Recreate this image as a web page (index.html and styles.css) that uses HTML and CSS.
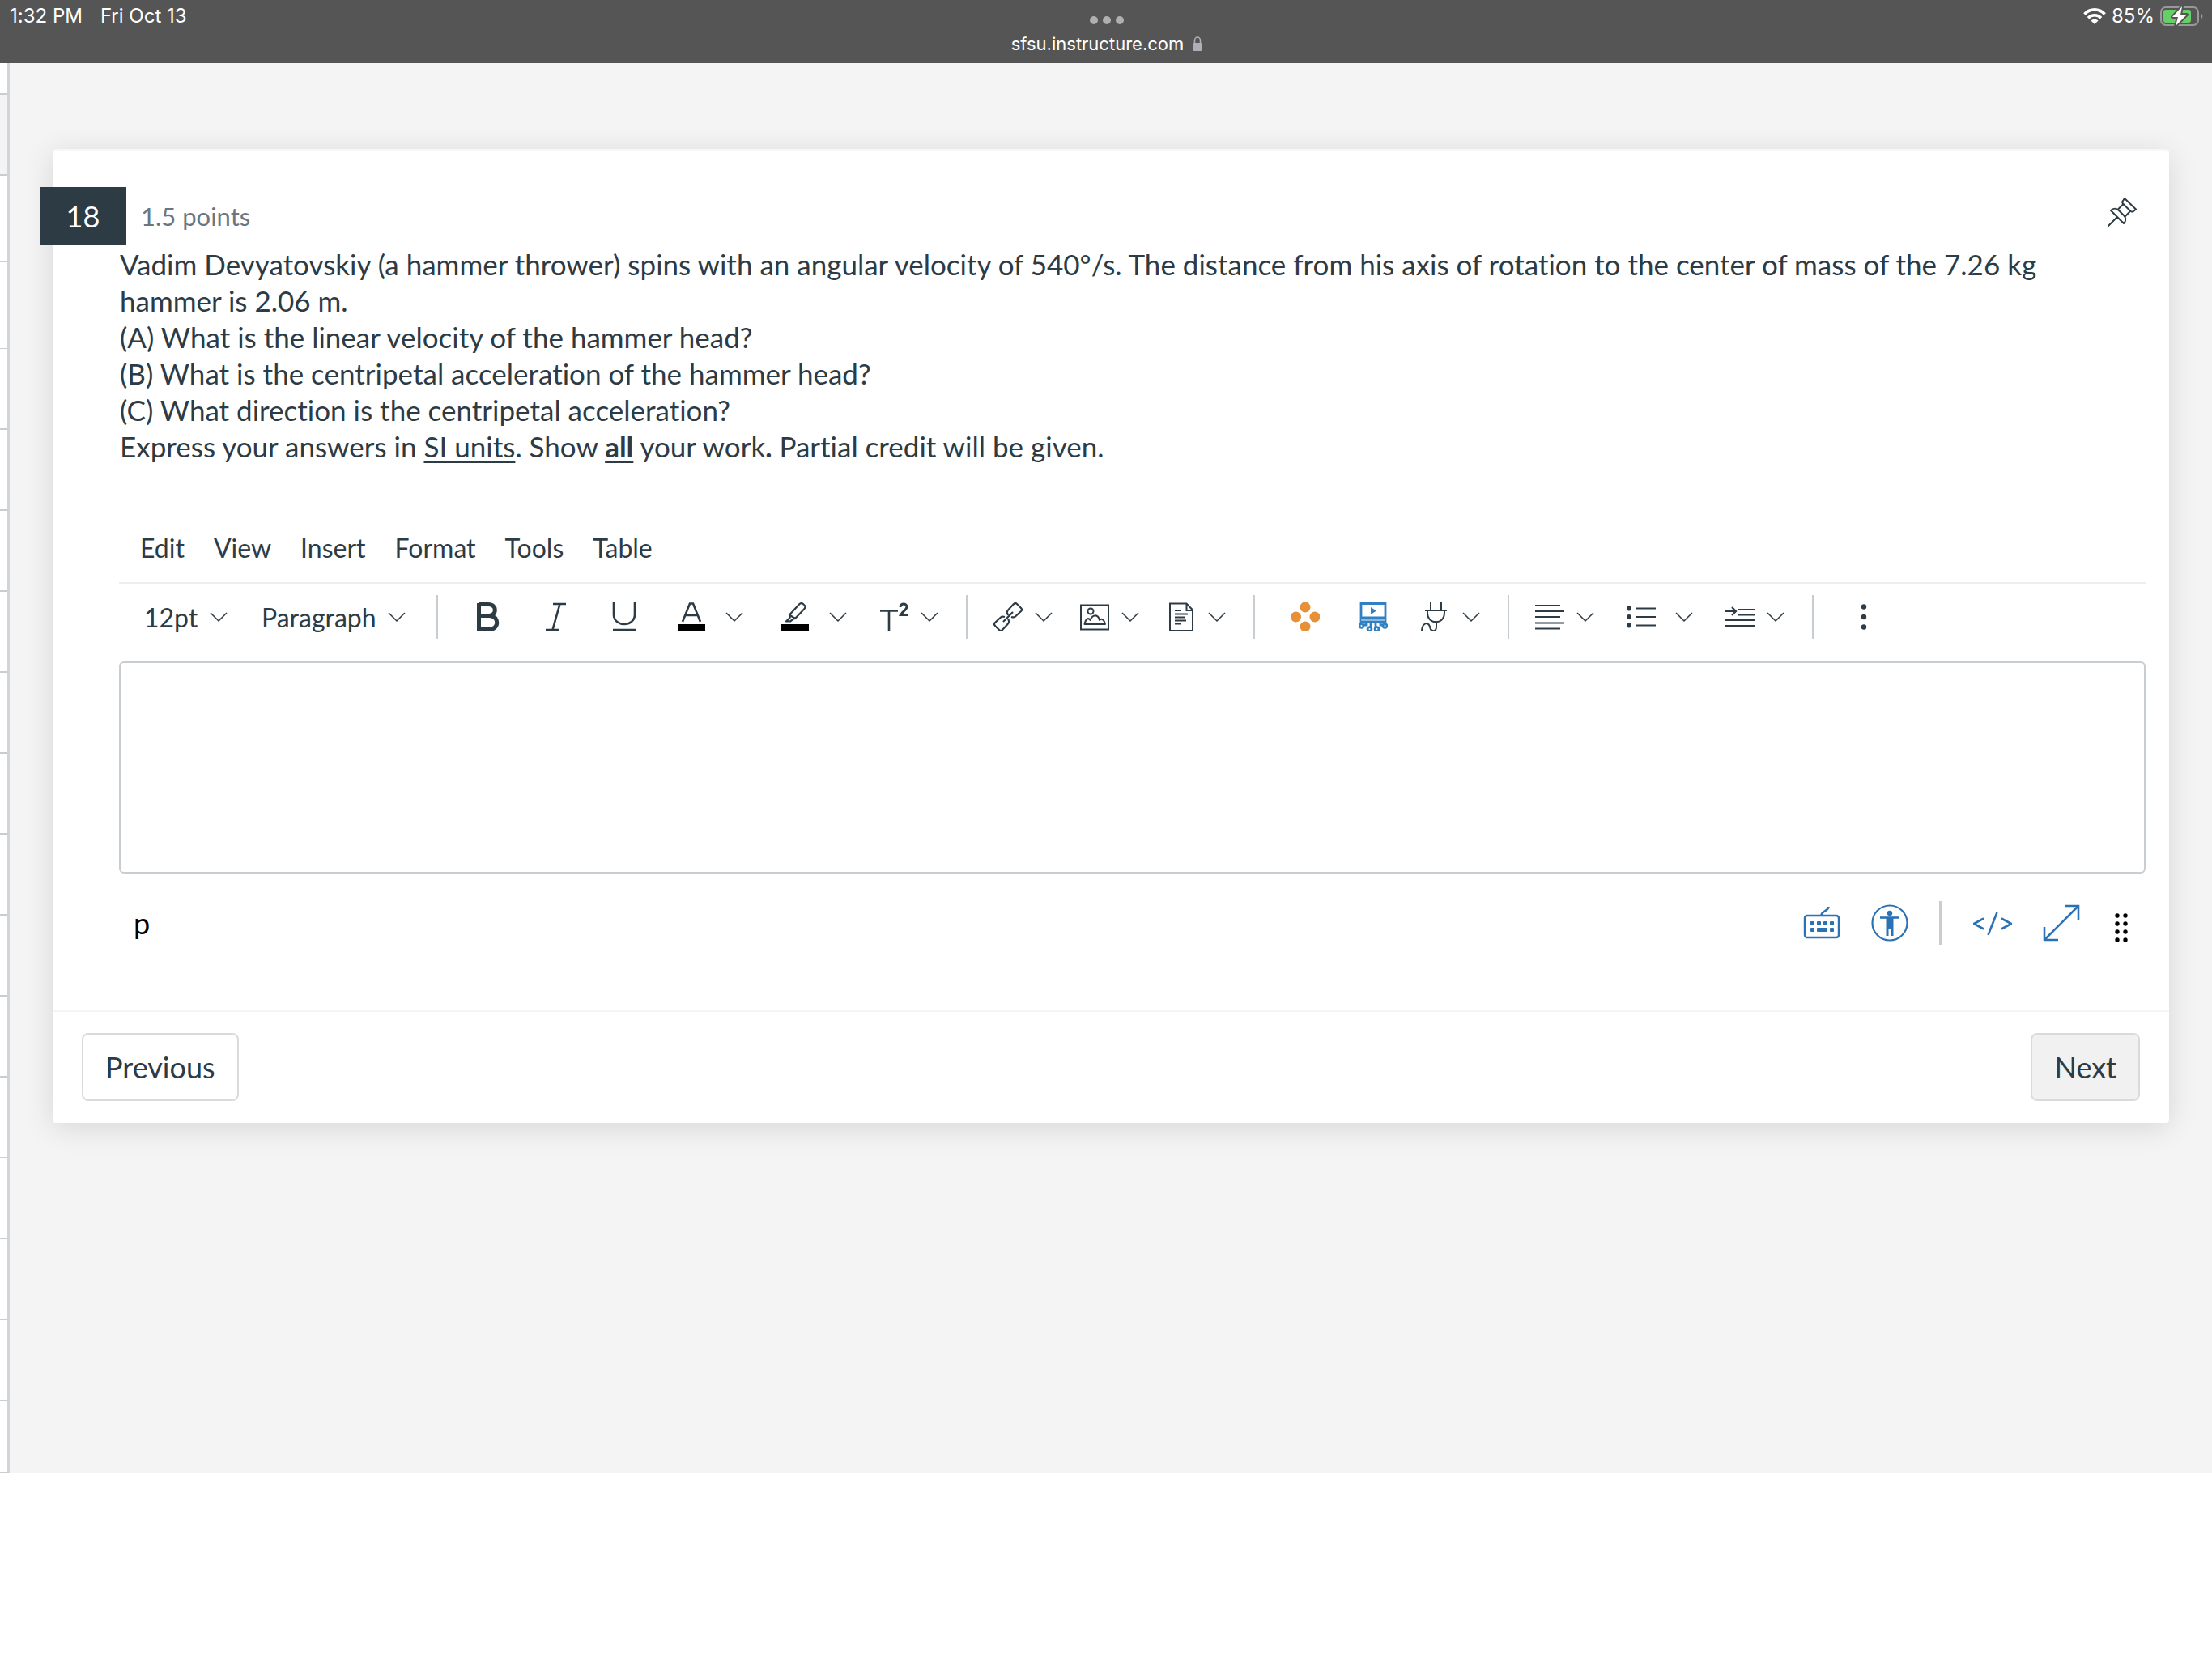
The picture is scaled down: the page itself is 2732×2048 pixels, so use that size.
FILE: index.html
```html
<!DOCTYPE html>
<html lang="en">
    <head>
        <meta charset="UTF-8">
        <meta name="viewport" content="width=device-width, initial-scale=1.0">
        <title>Quiz - Question 18</title>
        <link rel="stylesheet" href="styles.css">
    </head>

    <body>
        <svg class="defs" aria-hidden="true">
            <symbol id="chevron" viewBox="0 0 22 14"><path d="M1 2 L11 12 L21 2" fill="none" stroke="currentColor" stroke-width="1.500"/></symbol>
        </svg>

        <header class="statusbar">
            <div class="status-left">
                <span>1:32 PM</span>
                <span>Fri Oct 13</span>
            </div>
            <div class="status-center">
                <div class="dots"><i></i><i></i><i></i></div>
                <div class="address">
                    <span>sfsu.instructure.com</span>
                    <svg width="12" height="18" viewBox="0 0 12 18"><path d="M2.5 9 V5 a3.5 4 0 0 1 7 0 V9" fill="none" stroke="#b0aeb6" stroke-width="1.6"/><rect y="8" width="12" height="10" rx="2" fill="#b0aeb6"/></svg>
                </div>
            </div>
            <div class="status-right">
                <svg width="28" height="20" viewBox="0 0 28 20">
                    <g fill="none" stroke="#fff" stroke-width="3.6"><path d="M1.5 7.5 C8 0 20 0 26.5 7.5"/><path d="M6 12.2 C10.500 7.500 17.500 7.500 22 12.200"/></g>
                    <path d="M9.500 15.500 C12 13.200 16 13.200 18.500 15.500 L14 20 Z" fill="#fff"/>
                </svg>
                <span>85%</span>
                <svg width="54" height="26" viewBox="0 0 54 26">
                    <rect x="1" y="2" width="46" height="22" rx="6" fill="none" stroke="#999" stroke-width="2"/>
                    <path d="M50 9 a4.500 4.500 0 0 1 0 8 Z" fill="#999"/>
                    <rect x="4" y="5" width="34" height="16" rx="3" fill="#65d065"/>
                    <path d="M27 1 L15 14 H22 L19 25 L33 11 H25 Z" fill="#fff" stroke="#555" stroke-width="4" stroke-linejoin="round" paint-order="stroke"/>
                </svg>
            </div>
        </header>

        <div class="page">
            <aside class="rail">
                <div class="cell cell-top"></div>
                <div class="cell current"></div>
                <div class="cell tall"></div>
                <div class="cell tall"></div>
                <div class="cell"></div>
                <div class="cell"></div>
                <div class="cell"></div>
                <div class="cell"></div>
                <div class="cell"></div>
                <div class="cell"></div>
                <div class="cell"></div>
                <div class="cell"></div>
                <div class="cell"></div>
                <div class="cell"></div>
                <div class="cell"></div>
                <div class="cell"></div>
                <div class="cell"></div>
                <div class="cell cell-last"></div>
            </aside>

            <main class="content">
                <section class="card">
                    <div class="question-head">
                        <span class="number">18</span>
                        <span class="points">1.5 points</span>
                        <button class="pin" aria-label="Pin question">
                            <svg width="36" height="36" viewBox="0 0 36 36" fill="none" stroke="currentColor" stroke-width="2" stroke-linejoin="round" stroke-linecap="round"><path d="M1 35 L12 24 M21 1 L35 14.500 L32 17 C31 18 29 17.500 28 16.500 L19.500 8 C18 6.500 18 5 19 4 Z M18.500 9 L13 14.500 M27 18 L22 23 M4 16 C7 13 11 13 14 16 L20 22 C23 25 23 29 20 32 Z"/></svg>
                        </button>
                    </div>

                    <div class="question">
                        <p>Vadim Devyatovskiy (a hammer thrower) spins with an angular velocity of 540º/s. The distance from his axis of rotation to the center of mass of the 7.26 kg hammer is 2.06 m.</p>
                        <p>(A) What is the linear velocity of the hammer head?</p>
                        <p>(B) What is the centripetal acceleration of the hammer head?</p>
                        <p>(C) What direction is the centripetal acceleration?</p>
                        <p>Express your answers in <u>SI units</u>. Show <u><b>all</b></u> your work<b>.</b> Partial credit will be given.</p>
                    </div>

                    <div class="editor">
                        <div class="menubar">
                            <button>Edit</button>
                            <button>View</button>
                            <button>Insert</button>
                            <button>Format</button>
                            <button>Tools</button>
                            <button>Table</button>
                        </div>

                        <div class="toolbar">
                            <div class="picker">
                                <select aria-label="Font size"><option>12pt</option></select>
                                <svg class="chev"><use href="#chevron"/></svg>
                            </div>
                            <div class="picker">
                                <select aria-label="Block type"><option>Paragraph</option></select>
                                <svg class="chev"><use href="#chevron"/></svg>
                            </div>

                            <div class="group loose">
                                <button class="tool" aria-label="Bold">
                                    <svg viewBox="0 0 36 36"><path d="M6 2.500 H18 C29 2.500 29 16.500 19 16.500 H6 M19 16.500 C32 16.500 32 33.500 19 33.500 H6 M6.500 1 V35" fill="none" stroke="currentColor" stroke-width="5"/></svg>
                                </button>
                                <button class="tool" aria-label="Italic">
                                    <svg viewBox="0 0 36 36"><path d="M14 2 H30 M5 34 H22 M22.500 2 L13.500 34" fill="none" stroke="currentColor" stroke-width="2.600"/></svg>
                                </button>
                                <button class="tool" aria-label="Underline">
                                    <svg viewBox="0 0 36 36"><path d="M5 0 V15 C5 31 31 31 31 15 V0 M4 34 H32" fill="none" stroke="currentColor" stroke-width="2.600"/></svg>
                                </button>
                                <div class="split wide">
                                    <button aria-label="Text color"><svg viewBox="0 0 36 36"><path d="M7 24 L16 1.500 H20 L29 24 M10.500 16 H25.500" fill="none" stroke="currentColor" stroke-width="2.600"/><path d="M1 27 H35 V36 H1 Z" fill="#000"/></svg></button>
                                    <button aria-label="Text color options"><svg class="chev"><use href="#chevron"/></svg></button>
                                </div>
                                <div class="split wide">
                                    <button aria-label="Highlight"><svg viewBox="0 0 36 36"><path d="M11 15.500 L23 2.500 C25 0.500 27 1 28.500 2.500 C31 4.500 31 6 29 8.500 L18 20 Z M11 15.500 C13 18 11 20 9.500 21 L7 23.500 H12 L14 22 C15 21 16.500 20 18 20" fill="none" stroke="currentColor" stroke-width="2.200" stroke-linejoin="round"/><path d="M1 27 H35 V36 H1 Z" fill="#000"/></svg></button>
                                    <button aria-label="Highlight options"><svg class="chev"><use href="#chevron"/></svg></button>
                                </div>
                                <div class="split">
                                    <button aria-label="Superscript"><svg viewBox="0 0 36 36" fill="none" stroke="currentColor"><path d="M1 10.500 H23 M12 10.500 V35" stroke-width="2.600"/><path d="M26 6 C26 0.500 34 1 34 5.500 C34 9 29 11 26.500 15.500 H36" stroke-width="3"/></svg></button>
                                    <button aria-label="Superscript options"><svg class="chev"><use href="#chevron"/></svg></button>
                                </div>
                            </div>

                            <div class="group">
                                <div class="split">
                                    <button aria-label="Link"><svg viewBox="0 0 36 36" fill="none" stroke="currentColor" stroke-width="2.200" stroke-linejoin="round"><path d="M18 16 L17 13 C16.500 11 17 10.500 18.500 9 L25 2 C26.500 0.500 27.500 0.500 29 2 L34 7 C35.500 8.500 35.500 9.500 34 11 L27 17.500 C26 18.500 25 19 22 18"/><path d="M18 20 L19 23 C19.500 25 19 25.500 17.500 27 L11 34 C9.500 35.500 8.500 35.500 7 34 L2 29 C0.500 27.500 0.500 26.500 2 25 L9 18.500 C10 17.500 11 17 14 18"/><path d="M12 24 L24 12"/></svg></button>
                                    <button aria-label="Link options"><svg class="chev"><use href="#chevron"/></svg></button>
                                </div>
                                <div class="split">
                                    <button aria-label="Image"><svg viewBox="0 0 36 36" fill="none" stroke="currentColor" stroke-width="2"><path d="M1 3.500 H35 V33.500 H1 Z"/><circle cx="13" cy="11" r="3.500"/><path d="M5.500 27 C7 20 10 18.500 12.500 22 C15 15 22 14 24 22 C27 19 30 22 31 27 Z" stroke-linejoin="round"/></svg></button>
                                    <button aria-label="Image options"><svg class="chev"><use href="#chevron"/></svg></button>
                                </div>
                                <div class="split">
                                    <button aria-label="Document"><svg viewBox="0 0 36 36" fill="none" stroke="currentColor" stroke-width="2"><path d="M4 1.500 H24.500 L32 9.500 V35 H4 Z M24.500 1.500 V10 H32"/><path d="M10 10 H18 M10 14.500 H26 M10 18.500 H22 M10 22.500 H24 M10 26.500 H18"/></svg></button>
                                    <button aria-label="Document options"><svg class="chev"><use href="#chevron"/></svg></button>
                                </div>
                            </div>

                            <div class="group loose">
                                <button class="tool" aria-label="Studio">
                                    <svg viewBox="0 0 36 36" fill="#e69138"><circle cx="18" cy="6" r="6.500"/><circle cx="6.500" cy="18" r="6.500"/><circle cx="30" cy="18" r="6.500"/><circle cx="18" cy="30" r="6.500"/></svg>
                                </button>
                                <button class="tool" aria-label="Media">
                                    <svg viewBox="0 0 36 36" fill="none" stroke="#3180c2" stroke-width="2.800"><path d="M3 1.500 H33 V24 H3 Z M3 19 H33" /><path d="M3 21.500 H33" stroke="#8bb8df"/><path d="M15 6 L22 10.500 L15 15 Z" fill="#3180c2" stroke="none"/><path d="M9 24 V28 H5 M15 24 V31 M21 24 V31 M27 24 V28 H31"/><circle cx="3.500" cy="29" r="2.400"/><circle cx="13.500" cy="33" r="2.400"/><circle cx="22.500" cy="33" r="2.400"/><circle cx="32.500" cy="29" r="2.400"/></svg>
                                </button>
                                <div class="split">
                                    <button aria-label="Apps"><svg viewBox="0 0 36 36" fill="none" stroke="currentColor" stroke-width="2"><path d="M12 0 V10 M25 0 V10 M5 10 H32 M8 10 V13 C8 28 29 28 29 13 V10 M19 24 V30 C19 37 12 37 11 30 L10 28 C8 24 1 26 1 36"/></svg></button>
                                    <button aria-label="Apps options"><svg class="chev"><use href="#chevron"/></svg></button>
                                </div>
                            </div>

                            <div class="group">
                                <div class="split">
                                    <button aria-label="Align"><svg viewBox="0 0 36 36"><path d="M0 4 H31 M0 11 H36 M0 18 H31 M0 25.500 H36 M0 32.500 H31" stroke="currentColor" stroke-width="2.200"/></svg></button>
                                    <button aria-label="Align options"><svg class="chev"><use href="#chevron"/></svg></button>
                                </div>
                                <div class="split wide">
                                    <button aria-label="List"><svg viewBox="0 0 36 36"><path d="M11 7.500 H36 M11 18 H36 M11 28.500 H36" stroke="currentColor" stroke-width="2.200"/><g fill="currentColor"><circle cx="3" cy="7.500" r="3"/><circle cx="3" cy="18" r="3"/><circle cx="3" cy="28.500" r="3"/></g></svg></button>
                                    <button aria-label="List options"><svg class="chev"><use href="#chevron"/></svg></button>
                                </div>
                                <div class="split">
                                    <button aria-label="Indent"><svg viewBox="0 0 36 36"><path d="M16 9 H36 M16 15.500 H36 M0 22 H36 M0 29 H36 M0 11 H13 M8 6 L13 11 L8 16" fill="none" stroke="currentColor" stroke-width="2.200"/></svg></button>
                                    <button aria-label="Indent options"><svg class="chev"><use href="#chevron"/></svg></button>
                                </div>
                            </div>

                            <div class="group loose">
                                <button class="tool" aria-label="More">
                                    <svg viewBox="0 0 36 36" fill="currentColor"><circle cx="18" cy="5.500" r="3.200"/><circle cx="18" cy="18" r="3.200"/><circle cx="18" cy="30.500" r="3.200"/></svg>
                                </button>
                            </div>
                        </div>

                        <textarea class="answer" aria-label="Answer"></textarea>

                        <div class="editor-status">
                            <span class="path">p</span>
                            <button aria-label="Keyboard shortcuts">
                                <svg width="46" height="46" viewBox="0 0 46 46" fill="currentColor"><rect x="2" y="14" width="42" height="27" rx="3" fill="none" stroke="currentColor" stroke-width="2.400"/><path d="M22.500 14 C22.500 8 31 9 31.500 3" fill="none" stroke="currentColor" stroke-width="2.600"/><rect x="9" y="21" width="5" height="5" rx="1"/><rect x="17" y="21" width="5" height="5" rx="1"/><rect x="25" y="21" width="5" height="5" rx="1"/><rect x="33" y="21" width="5" height="5" rx="1"/><rect x="9" y="29" width="5" height="5" rx="1"/><rect x="17" y="29" width="13" height="5" rx="1"/><rect x="33" y="29" width="5" height="5" rx="1"/></svg>
                            </button>
                            <button aria-label="Accessibility checker">
                                <svg width="46" height="46" viewBox="0 0 46 46"><circle cx="23" cy="23" r="21.500" fill="none" stroke="currentColor" stroke-width="2.200"/><circle cx="23" cy="11" r="3.200" fill="currentColor"/><path d="M11 16.500 H35" stroke="currentColor" stroke-width="2.600"/><path d="M18.500 16 H27.500 V39 H24.500 V30 H21.500 V39 H18.500 Z" fill="currentColor"/></svg>
                            </button>
                            <span class="divider"></span>
                            <button aria-label="HTML editor">
                                <svg width="48" height="46" viewBox="2 0 48 46" fill="none" stroke="currentColor" stroke-width="2.600"><path d="M15 17.500 L3 24 L15 30.500 M37 17.500 L49 24 L37 30.500 M31.500 10 L20.500 38"/></svg>
                            </button>
                            <button aria-label="Fullscreen">
                                <svg width="46" height="46" viewBox="0 0 46 46" fill="none" stroke="currentColor" stroke-width="2.600"><path d="M2 44 L44 2 M27 2 H44 V19 M2 28 V44 H19"/></svg>
                            </button>
                            <svg class="grip" width="26" height="52" viewBox="-4 -12 26 52"><circle cx="4" cy="5" r="2.700"/><circle cx="14" cy="5" r="2.700"/><circle cx="4" cy="15" r="2.700"/><circle cx="14" cy="15" r="2.700"/><circle cx="4" cy="25" r="2.700"/><circle cx="14" cy="25" r="2.700"/><circle cx="4" cy="35" r="2.700"/><circle cx="14" cy="35" r="2.700"/></svg>
                        </div>
                    </div>

                    <div class="card-footer">
                        <button class="btn">Previous</button>
                        <button class="btn btn-next">Next</button>
                    </div>
                </section>
            </main>
        </div>
    </body>
</html>
```

FILE: styles.css
```css
* {
    box-sizing: border-box;
}
body {
    margin: 0;
    font-family: Lato, "Liberation Sans", sans-serif;
    font-size: 36px;
    font-variant-ligatures: none;
    color: #2d3b45;
    background: white;
}
button, select {
    font: inherit;
    color: inherit;
    background: none;
    border: 0;
    padding: 0;
    margin: 0;
}
svg {
    display: block;
    flex: none;
}
.defs {
    position: absolute;
    width: 0;
    height: 0;
}

/* tablet status bar */
.statusbar {
    display: grid;
    grid-template-columns: 1fr auto 1fr;
    align-items: start;
    height: 78px;
    padding: 0 10px 0 12px;
    background: #555;
    color: white;
    font-family: Inter, sans-serif;
    font-size: 24px;
    line-height: 40px;
}
.status-left {
    display: flex;
    gap: 22px;
}
.status-center {
    padding-top: 20px;
}
.dots {
    display: flex;
    justify-content: center;
    gap: 6px;
}
.dots i {
    width: 10px;
    height: 10px;
    border-radius: 50%;
    background: #b0b0b0;
}
.address {
    display: flex;
    align-items: center;
    gap: 11px;
    font-size: 22px;
    line-height: 48px;
}
.status-right {
    display: flex;
    justify-content: flex-end;
    align-items: center;
    gap: 7px;
}

.page {
    display: flex;
    background: #f4f4f4;
}
.rail {
    width: 12px;
    flex: none;
    background: white;
    border-right: 3px solid #d1d5da;
}
.cell {
    height: 100px;
    border-bottom: 2px solid #c7cdd1;
}
.cell-top {
    height: 39px;
}
.current {
    background: #f4f4f4;
}
.tall {
    height: 107px;
    border-bottom: 1px solid #c7cdd1;
}
.cell-last {
    height: 89px;
}
.content {
    flex: 1;
    padding: 106px 53px 0;
}

.card {
    background: white;
    border-top: 3px solid #f7f7f7;
    border-radius: 4px;
    box-shadow: 0 6px 36px rgba(0, 0, 0, 0.12);
}
.question-head {
    display: flex;
    align-items: center;
    padding: 44px 40px 0 0;
}
.number {
    width: 107px;
    margin-left: -16px;
    line-height: 72px;
    text-align: center;
    color: white;
    background: #2d3b45;
}
.points {
    margin-left: 18px;
    font-size: 31px;
    color: #6b7780;
}
.pin {
    margin-left: auto;
    margin-bottom: 10px;
}
.question {
    padding: 1px 83px 0;
    font-size: 35px;
    line-height: 45px;
}
.question p {
    margin: 0;
}
u {
    text-underline-offset: 4px;
}

.editor {
    padding: 67px 29px 0 82px;
}
.menubar {
    display: flex;
    gap: 36px;
    padding: 0 26px 6px;
    font-size: 32px;
    line-height: 72px;
    border-bottom: 2px solid #eee;
}
.toolbar {
    display: flex;
    align-items: center;
    height: 96px;
    padding: 0 0 14px 10px;
    font-size: 32px;
}
.toolbar svg {
    width: 36px;
    height: 36px;
}
.toolbar .chev {
    width: 22px;
    height: 14px;
}
.picker {
    display: flex;
    align-items: center;
    gap: 14px;
    padding: 0 21px;
}
.picker select {
    appearance: none;
}
.group {
    display: flex;
    align-items: center;
    height: 54px;
    margin-left: 17px;
    padding-left: 15px;
    border-left: 2px solid #c7cdd1;
}
.loose {
    padding-left: 20px;
}
.tool {
    padding: 0 24px;
}
.split {
    display: flex;
    align-items: center;
    gap: 15px;
    padding: 0 17px;
}
.wide {
    gap: 24px;
    padding: 0 23px;
}
.answer {
    display: block;
    width: 100%;
    height: 262px;
    padding: 20px;
    font: inherit;
    border: 2px solid #c7cdd1;
    border-radius: 6px;
    resize: none;
}
.editor-status {
    display: flex;
    align-items: center;
    gap: 38px;
    height: 169px;
    padding: 0 17px 47px 18px;
    color: #2b72b5;
}
.path {
    margin-right: auto;
    color: black;
}
.divider {
    width: 4px;
    height: 54px;
    background: #ccc;
}
.grip {
    fill: black;
}

.card-footer {
    display: flex;
    justify-content: space-between;
    padding: 26px 36px 27px;
    border-top: 2px solid #f5f5f5;
}
.btn {
    height: 84px;
    padding: 0 27px;
    border: 2px solid #d9dadb;
    border-radius: 8px;
}
.btn-next {
    background: #f1f1f1;
}
```
